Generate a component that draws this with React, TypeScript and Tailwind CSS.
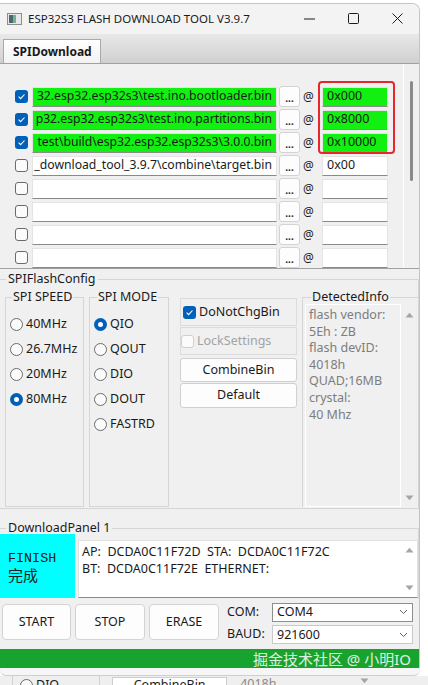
import React from "react";

const sans = "font-['Noto_Sans','Liberation_Sans',sans-serif]";
const cjk = "font-['Noto_Sans','Noto_Sans_CJK_SC',sans-serif]";

type FileRow = { on: boolean; path: string; addr: string; hot?: boolean };

const files: FileRow[] = [
  { on: true, path: "32.esp32.esp32s3\\test.ino.bootloader.bin", addr: "0x000", hot: true },
  { on: true, path: "p32.esp32.esp32s3\\test.ino.partitions.bin", addr: "0x8000", hot: true },
  { on: true, path: "test\\build\\esp32.esp32.esp32s3\\3.0.0.bin", addr: "0x10000", hot: true },
  { on: false, path: "_download_tool_3.9.7\\combine\\target.bin", addr: "0x00" },
  { on: false, path: "", addr: "" },
  { on: false, path: "", addr: "" },
  { on: false, path: "", addr: "" },
  { on: false, path: "", addr: "" },
];

const speeds = [
  { label: "40MHz", on: false },
  { label: "26.7MHz", on: false },
  { label: "20MHz", on: false },
  { label: "80MHz", on: true },
];

const modes = [
  { label: "QIO", on: true },
  { label: "QOUT", on: false },
  { label: "DIO", on: false },
  { label: "DOUT", on: false },
  { label: "FASTRD", on: false },
];

const flashInfo = ["flash vendor:", "5Eh : ZB", "flash devID:", "4018h", "QUAD;16MB", "crystal:", "40 Mhz"];

function Check({ on, disabled }: { on?: boolean; disabled?: boolean }) {
  if (on)
    return (
      <span className="flex h-[13px] w-[13px] shrink-0 items-center justify-center rounded-[3px] bg-[#005fb8]">
        <svg width="9" height="9" viewBox="0 0 9 9">
          <path d="M1.6 4.7 L3.6 6.7 L7.5 2.5" fill="none" stroke="white" strokeWidth="1.1" />
        </svg>
      </span>
    );
  return (
    <span
      className={`h-[13px] w-[13px] shrink-0 rounded-[3px] border bg-[#fbfbfb] ${
        disabled ? "border-[#cfcfcf]" : "border-[#6b6b6b]"
      }`}
    />
  );
}

function Radio({ on }: { on?: boolean }) {
  if (on)
    return (
      <span className="flex h-[13px] w-[13px] shrink-0 items-center justify-center rounded-full bg-[#005fb8]">
        <span className="h-[5px] w-[5px] rounded-full bg-white" />
      </span>
    );
  return <span className="h-[13px] w-[13px] shrink-0 rounded-full border border-[#6b6b6b] bg-[#fbfbfb]" />;
}

function Arrow({ up }: { up?: boolean }) {
  return (
    <svg width="9" height="6" viewBox="0 0 9 6">
      <path d={up ? "M0.5 5.5 L4.5 0.8 L8.5 5.5 Z" : "M0.5 0.5 L4.5 5.2 L8.5 0.5 Z"} fill="#a5a5a5" />
    </svg>
  );
}

function Chevron() {
  return (
    <svg width="9" height="6" viewBox="0 0 9 6" className="ml-auto mr-[4px]">
      <path d="M1 1 L4.5 4.5 L8 1" fill="none" stroke="#5f5f5f" strokeWidth="1" />
    </svg>
  );
}

function FileLine({ row }: { row: FileRow }) {
  const fill = row.hot ? "bg-[#12f012]" : "bg-white";
  return (
    <div className="flex h-[23px] items-center pl-[15px]">
      <Check on={row.on} />
      <div
        className={`ml-[4px] flex h-[20px] w-[245px] items-center justify-end overflow-hidden whitespace-nowrap border border-[#e4e4e4] border-b-[#8a8a8a] pr-[4px] text-[12.2px] ${fill}`}
      >
        {row.path}
      </div>
      <div className="ml-[2px] flex h-[21px] w-[21px] items-end justify-center rounded-[3px] border border-[#d3d3d3] bg-[#fdfdfd] pb-[3px] text-[10px] font-bold leading-[10px]">
        ...
      </div>
      <span className="ml-[3px] w-[13px] text-[12px]">@</span>
      <div
        className={`ml-[6px] flex h-[20px] w-[66px] items-center border border-[#e4e4e4] border-b-[#8a8a8a] pl-[4px] ${fill}`}
      >
        {row.addr}
      </div>
    </div>
  );
}

function TitleBar() {
  return (
    <div className="flex h-[30px] shrink-0 items-center bg-[#f3f3f3] pl-[7px] pb-[1px]">
      <svg width="15" height="12" viewBox="0 0 15 12">
        <rect x="0.5" y="0.5" width="14" height="11" fill="#e8e8e8" stroke="#8d8d8d" />
        <rect x="2" y="2" width="4" height="8" fill="#4a6870" />
        <rect x="6" y="2" width="3" height="8" fill="#74b392" />
      </svg>
      <span className="ml-[6px] text-[11.5px] text-[#1b1b1b]">ESP32S3 FLASH DOWNLOAD TOOL V3.9.7</span>
      <div className="ml-auto flex h-full">
        <div className="flex w-[44px] items-center justify-center">
          <svg width="11" height="2" viewBox="0 0 11 2">
            <path d="M0 1 H11" stroke="#1b1b1b" strokeWidth="1" />
          </svg>
        </div>
        <div className="flex w-[44px] items-center justify-center">
          <svg width="11" height="11" viewBox="0 0 11 11">
            <rect x="0.5" y="0.5" width="10" height="10" rx="1" fill="none" stroke="#1b1b1b" />
          </svg>
        </div>
        <div className="flex w-[44px] items-center justify-center">
          <svg width="11" height="11" viewBox="0 0 11 11">
            <path d="M0.5 0.5 L10.5 10.5 M10.5 0.5 L0.5 10.5" stroke="#1b1b1b" strokeWidth="1" />
          </svg>
        </div>
      </div>
    </div>
  );
}

export default function App() {
  return (
    <div className={`flex h-[685px] w-[428px] flex-col overflow-hidden bg-white text-[12.5px] text-[#1a1a1a] ${sans}`}>
      <div className="flex h-[668px] shrink-0 pt-[3px]">
        <div className="flex w-[420px] flex-col overflow-hidden rounded-tr-[8px] border-r border-t border-[#c4c4c4]">
          <TitleBar />

          {/* tab strip */}
          <div className="flex h-[29px] shrink-0 items-end bg-gradient-to-b from-[#e8e8e8] to-[#d0d0d0] pl-[3px]">
            <div className="flex h-[24px] w-[98px] items-center border border-b-0 border-[#a9a9a9] bg-gradient-to-b from-white to-[#f2f2f2] pl-[9px] text-[12px] font-bold">
              SPIDownload
            </div>
          </div>

          <div className="flex flex-1 flex-col border-t border-[#a0a0a0] bg-[#f0f0f0]">
            {/* file list */}
            <div className="relative flex h-[205px] shrink-0 border-b border-[#a0a0a0]">
              <div className="flex-1 pt-[21px]">
                {files.map((f, i) => (
                  <FileLine key={i} row={f} />
                ))}
              </div>
              <div className="flex w-[16px] justify-center border-l border-white pt-[17px]">
                <div className="h-[100px] w-[3px] rounded-full bg-[#8a8a8a]" />
              </div>
              <div className="absolute left-[318px] top-[17px] h-[73px] w-[77px] rounded-[4px] border-2 border-[#e8262b]" />
            </div>

            {/* SPI flash config */}
            <fieldset className="mt-[1px] h-[239px] shrink-0 border-b border-r border-t border-[#d5d5d5]">
              <legend className="ml-[6px] px-[2px] leading-[18px]">SPIFlashConfig</legend>
              <div className="flex h-[219px] pl-[5px]">
                <fieldset className="h-full w-[79px] border border-[#d5d5d5]">
                  <legend className="ml-[6px] px-[1px] leading-[18px]">SPI SPEED</legend>
                  <div className="pl-[4px] pt-[6px]">
                    {speeds.map((s) => (
                      <div key={s.label} className="flex h-[25px] items-center gap-[3px]">
                        <Radio on={s.on} />
                        {s.label}
                      </div>
                    ))}
                  </div>
                </fieldset>
                <fieldset className="ml-[5px] h-full w-[80px] border border-[#d5d5d5]">
                  <legend className="ml-[7px] px-[1px] leading-[18px]">SPI MODE</legend>
                  <div className="pl-[4px] pt-[6px]">
                    {modes.map((m) => (
                      <div key={m.label} className="flex h-[25px] items-center gap-[3px]">
                        <Radio on={m.on} />
                        {m.label}
                      </div>
                    ))}
                  </div>
                </fieldset>

                <div className="ml-[8px] flex w-[123px] flex-col px-[3px] pt-[10px]">
                  <div className="flex h-[28px] items-center gap-[3px] border border-[#dcdcdc] pl-[2px]">
                    <Check on />
                    DoNotChgBin
                  </div>
                  <div className="mt-[1px] flex h-[28px] items-center gap-[3px] border border-[#dcdcdc] text-[#a3a3a3]">
                    <Check disabled />
                    LockSettings
                  </div>
                  <div className="mt-[3px] flex h-[24px] items-center justify-center rounded-[3px] border border-[#d0d0d0] bg-[#fdfdfd]">
                    CombineBin
                  </div>
                  <div className="mt-[1px] flex h-[25px] items-center justify-center rounded-[3px] border border-[#d0d0d0] bg-[#fdfdfd]">
                    Default
                  </div>
                </div>

                <fieldset className="ml-[2px] flex h-full flex-1 border-l border-t border-[#d5d5d5]">
                  <legend className="ml-[8px] px-[1px] leading-[18px]">DetectedInfo</legend>
                  <div className="-mt-[2px] flex h-[203px] w-full">
                    <div className="ml-[2px] h-full w-[96px] border border-white pl-[3px] pt-[2px] leading-[16.6px] text-[#7d7d7d]">
                      {flashInfo.map((t) => (
                        <div key={t}>{t}</div>
                      ))}
                    </div>
                    <div className="flex flex-1 flex-col items-center justify-between pb-[6px] pt-[8px]">
                      <Arrow up />
                      <Arrow />
                    </div>
                  </div>
                </fieldset>
              </div>
            </fieldset>

            {/* download panel */}
            <fieldset className="mt-[10px] h-[80px] shrink-0 border-r border-t border-[#d5d5d5]">
              <legend className="ml-[6px] px-[2px] leading-[18px]">DownloadPanel 1</legend>
              <div className="-mt-[3px] flex">
                <div className="h-[64px] w-[75px] bg-[#00ffff] pl-[8px] pt-[17px] leading-[16px] text-[#202020]">
                  <div className="font-['Liberation_Mono',monospace] text-[13.4px]">FINISH</div>
                  <div className="font-['Noto_Sans_CJK_SC',sans-serif] text-[15px]">完成</div>
                </div>
                <div className="ml-[3px] mt-[6px] flex h-[58px] flex-1 border border-[#e2e2e2] border-b-[#8a8a8a] bg-white">
                  <div className="flex-1 whitespace-pre pl-[3px] pt-[2px] leading-[17px]">
                    <div>{"AP:  DCDA0C11F72D  STA:  DCDA0C11F72C"}</div>
                    <div>{"BT:  DCDA0C11F72E  ETHERNET:"}</div>
                  </div>
                  <div className="flex w-[16px] flex-col items-center justify-between pb-[6px] pt-[6px]">
                    <Arrow up />
                    <Arrow />
                  </div>
                </div>
              </div>
            </fieldset>

            {/* actions and port settings */}
            <div className="flex h-[50px] shrink-0 items-start">
              <div className="ml-[2px] mt-[5px] flex gap-[4px]">
                {["START", "STOP", "ERASE"].map((b, i) => (
                  <div
                    key={b}
                    className={`flex h-[36px] items-center justify-center rounded-[4px] border border-[#d3d3d3] bg-[#fdfdfd] ${
                      i === 0 ? "w-[69px]" : "w-[70px]"
                    }`}
                  >
                    {b}
                  </div>
                ))}
              </div>
              <div className="ml-[8px] mt-[2px] grid grid-cols-[45px_141px] grid-rows-[22px_22px] items-center">
                <span>COM:</span>
                <div className="flex h-[19px] items-center border border-[#8e8e8e] bg-white pl-[4px]">
                  COM4
                  <Chevron />
                </div>
                <span>BAUD:</span>
                <div className="flex h-[19px] items-center border border-[#c9c9c9] bg-white pl-[4px] pt-[2px]">
                  921600
                  <Chevron />
                </div>
              </div>
            </div>
          </div>

          {/* status bar */}
          <div className="flex h-[20px] shrink-0 items-center justify-end bg-[#18a22e] pr-[8px]">
            <span className={`text-[15px] leading-[20px] text-white/85 ${cjk}`}>掘金技术社区 @ 小明IO</span>
          </div>
        </div>
        <div className="flex-1 bg-white" />
      </div>

      {/* next window peeking below */}
      <div className="flex h-[17px] shrink-0 flex-col">
        <div className="h-[8px] w-[420px] rounded-b-[6px] border-b border-[#cfcfcf] bg-[#f6f6f6]" />
        <div className="flex h-[9px] items-start overflow-hidden bg-[#efefef]">
          <div className="ml-[12px] h-[12px] border-l border-[#d2d2d2]" />
          <div className="ml-[7px] mt-[2px] flex items-center gap-[3px] leading-[14px]">
            <Radio />
            DIO
          </div>
          <div className="ml-[40px] h-[12px] border-l border-[#d2d2d2]" />
          <div className="ml-[12px] mt-[1px] flex h-[14px] w-[115px] justify-center border border-[#cdcdcd] bg-white leading-[14px]">
            CombineBin
          </div>
          <span className="ml-[13px] mt-[1px] leading-[14px] text-[#8a8a8a]">4018h</span>
          <div className="ml-[84px] mt-[2px]">
            <Arrow />
          </div>
        </div>
      </div>
    </div>
  );
}
